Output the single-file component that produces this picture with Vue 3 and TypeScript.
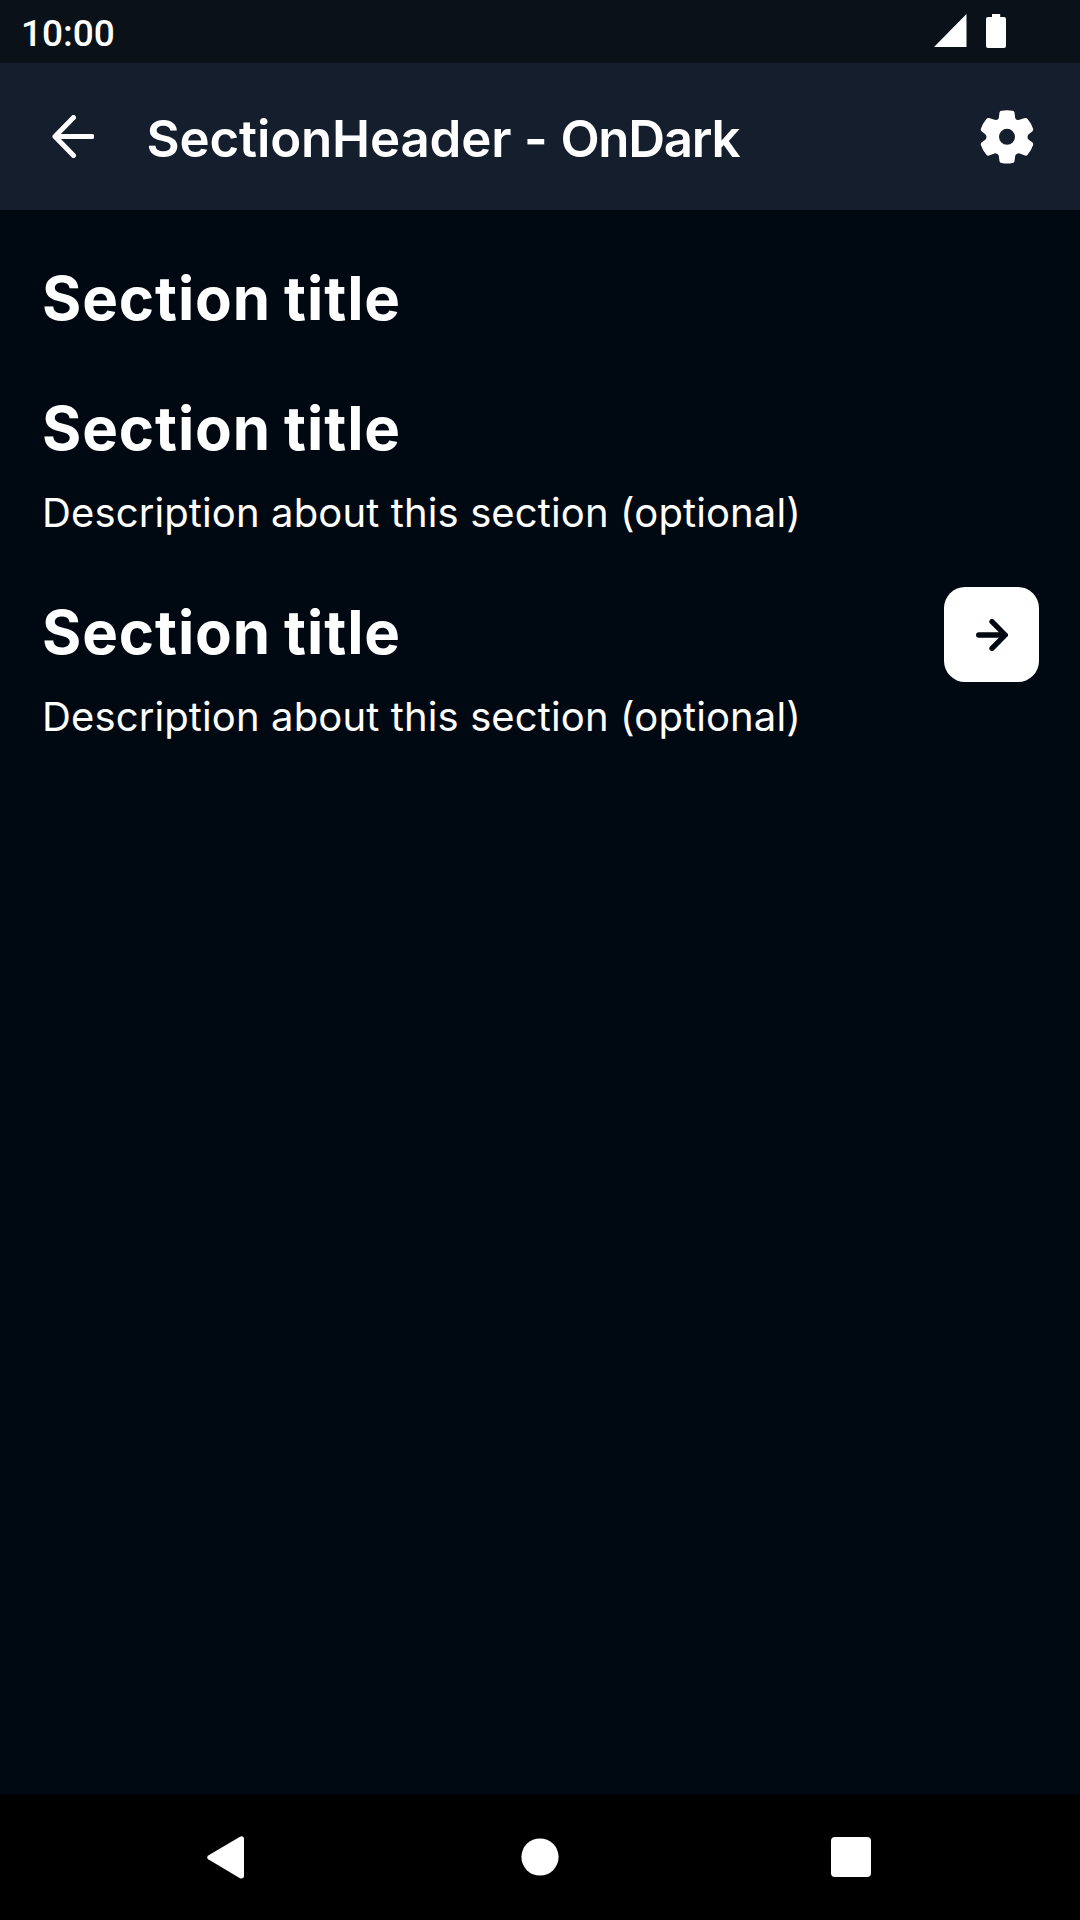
<script setup lang="ts">
interface Section {
  title: string
  description?: string
  action?: boolean
}

const sections: Section[] = [
  { title: 'Section title' },
  { title: 'Section title', description: 'Description about this section (optional)' },
  { title: 'Section title', description: 'Description about this section (optional)', action: true },
]
</script>

<template>
  <div class="screen">
    <div class="status-bar">
      <span class="clock">10:00</span>
      <div class="status-icons">
        <svg class="signal" width="33" height="33" viewBox="0 0 33 33"><path d="M0 33L32.5 0V33z" fill="#fff" /></svg>
        <svg width="20" height="34" viewBox="0 0 20 34"><path d="M6 0h8.2v3H18a2 2 0 0 1 2 2v27a2 2 0 0 1-2 2H2a2 2 0 0 1-2-2V5a2 2 0 0 1 2-2h4z" fill="#fff" /></svg>
      </div>
    </div>

    <header class="toolbar">
      <button class="icon-button back" type="button" aria-label="Back">
        <svg width="42" height="43" viewBox="0 0 42 43">
          <path d="M21.5 2.5L3 21.5L21.5 40.5M3 21.5H40" fill="none" stroke="#fff" stroke-width="5" stroke-linecap="round" stroke-linejoin="round" />
        </svg>
      </button>
      <h1 class="heading">SectionHeader - <span class="variant">OnDark</span></h1>
      <button class="icon-button settings" type="button" aria-label="Settings">
        <svg width="54" height="54" viewBox="0 0 54 54">
          <path fill="#fff" fill-rule="evenodd" d="M21.5 .7Q27 -.3 32.5 .7Q34.2 1 34.5 2.5L35.2 8Q35.5 10 38 10.1Q39.3 10.1 41 9.3L45 8Q46.6 7.6 47.6 9Q51.4 13.5 53.1 18.8Q53.6 20.4 52.2 21.4L48.7 24.2Q46.3 26.8 48.7 29.7L52.2 32.3Q53.6 33.3 53.1 35Q51.3 40.5 47.6 44.8Q46.6 46 45 45.5L41 44Q39.3 43.2 38 43.4Q35.5 43.5 35.2 46L34.5 51.3Q34.2 52.8 32.5 53Q27 54 21.5 53Q19.8 52.8 19.5 51.3L18.8 46Q18.5 43.5 16 43.4Q14.7 43.2 13 44L9 45.5Q7.4 46 6.4 44.8Q2.6 40.5 .9 35Q.4 33.3 1.8 32.3L5.3 29.7Q7.7 26.8 5.3 24.2L1.8 21.4Q.4 20.4 .9 18.8Q2.6 13.5 6.4 9Q7.4 7.6 9 8L13 9.3Q14.7 10.1 16 10.1Q18.5 10 18.8 8L19.5 2.5Q19.8 1 21.5 .7ZM27 18.8a8 8 0 1 0 0 16a8 8 0 1 0 0-16z" />
        </svg>
      </button>
    </header>

    <main class="content">
      <section v-for="(section, i) in sections" :key="i" class="section" :class="{ 'with-action': section.action }">
        <div class="copy">
          <h2 class="title">{{ section.title }}</h2>
          <p v-if="section.description" class="description">{{ section.description }}</p>
        </div>
        <button v-if="section.action" class="action" type="button" aria-label="Open section">
          <svg width="32" height="32" viewBox="0 0 32 32">
            <path d="M16 2.7L29.3 16L16 29.3M2.7 16H29" fill="none" stroke="#000811" stroke-width="5.3" stroke-linecap="round" stroke-linejoin="round" />
          </svg>
        </button>
      </section>
    </main>

    <nav class="nav-bar">
      <div class="nav-item back-item">
        <svg width="38" height="43" viewBox="0 0 38 43"><path d="M1.2 19.6L33 .7Q37 -.7 37 3V40Q37 43.3 33 42.2L1.2 23.3Q-.8 21.5 1.2 19.6z" fill="#fff" /></svg>
      </div>
      <div class="nav-item">
        <svg width="38" height="38" viewBox="0 0 38 38"><circle cx="19" cy="19" r="18.6" fill="#fff" /></svg>
      </div>
      <div class="nav-item"><span class="nav-recent"></span></div>
    </nav>
  </div>
</template>

<style>
body {
  margin: 0;
  background: #000811;
}
</style>

<style scoped>
.screen {
  display: flex;
  flex-direction: column;
  width: 1080px;
  height: 1920px;
  overflow: hidden;
  background: #000811;
  color: #fff;
  font-family: Inter, "Liberation Sans", sans-serif;
}
.status-bar {
  display: flex;
  flex: none;
  justify-content: space-between;
  box-sizing: border-box;
  height: 63px;
  padding: 0 74px 0 21px;
  background: #0a1119;
}
.clock {
  padding-top: 11px;
  font: 500 37px/46px Roboto, sans-serif;
}
.status-icons {
  display: flex;
  gap: 19px;
  padding-top: 14px;
}
.toolbar {
  display: flex;
  flex: none;
  align-items: center;
  box-sizing: border-box;
  height: 147px;
  padding: 0 46.5px 0 52px;
  background: #151e2c;
}
button {
  display: flex;
  align-items: center;
  justify-content: center;
  margin: 0;
  padding: 0;
  border: 0;
  background: none;
}
.heading {
  flex: 1;
  margin: 4px 0 0 52.5px;
  font-size: 51px;
  font-weight: 600;
  line-height: 64px;
  letter-spacing: -0.15px;
  white-space: nowrap;
}
.variant {
  letter-spacing: -1.3px;
}
.content {
  flex: 1;
  padding: 49px 41px 0 42px;
}
.section {
  display: flex;
  align-items: flex-start;
  justify-content: space-between;
  margin-bottom: 52px;
}
.with-action {
  margin-top: -4px;
}
.with-action .copy {
  padding-top: 6px;
}
.title {
  margin: 0;
  font-size: 60px;
  font-weight: 700;
  line-height: 78px;
  letter-spacing: 0.9px;
  word-spacing: -2px;
  white-space: nowrap;
}
.description {
  margin: 20px 0 0;
  font-size: 40px;
  font-weight: 400;
  line-height: 52px;
  letter-spacing: 0.12px;
  white-space: nowrap;
}
.action {
  width: 95px;
  height: 95px;
  border-radius: 21px;
  background: #fff;
}
.nav-bar {
  display: flex;
  flex: none;
  justify-content: center;
  align-items: center;
  height: 126px;
  background: #000;
}
.nav-item {
  display: flex;
  justify-content: center;
  box-sizing: border-box;
  width: 311px;
}
.back-item {
  padding-right: 7px;
}
.nav-recent {
  width: 40px;
  height: 40px;
  border-radius: 4px;
  background: #fff;
}
</style>
